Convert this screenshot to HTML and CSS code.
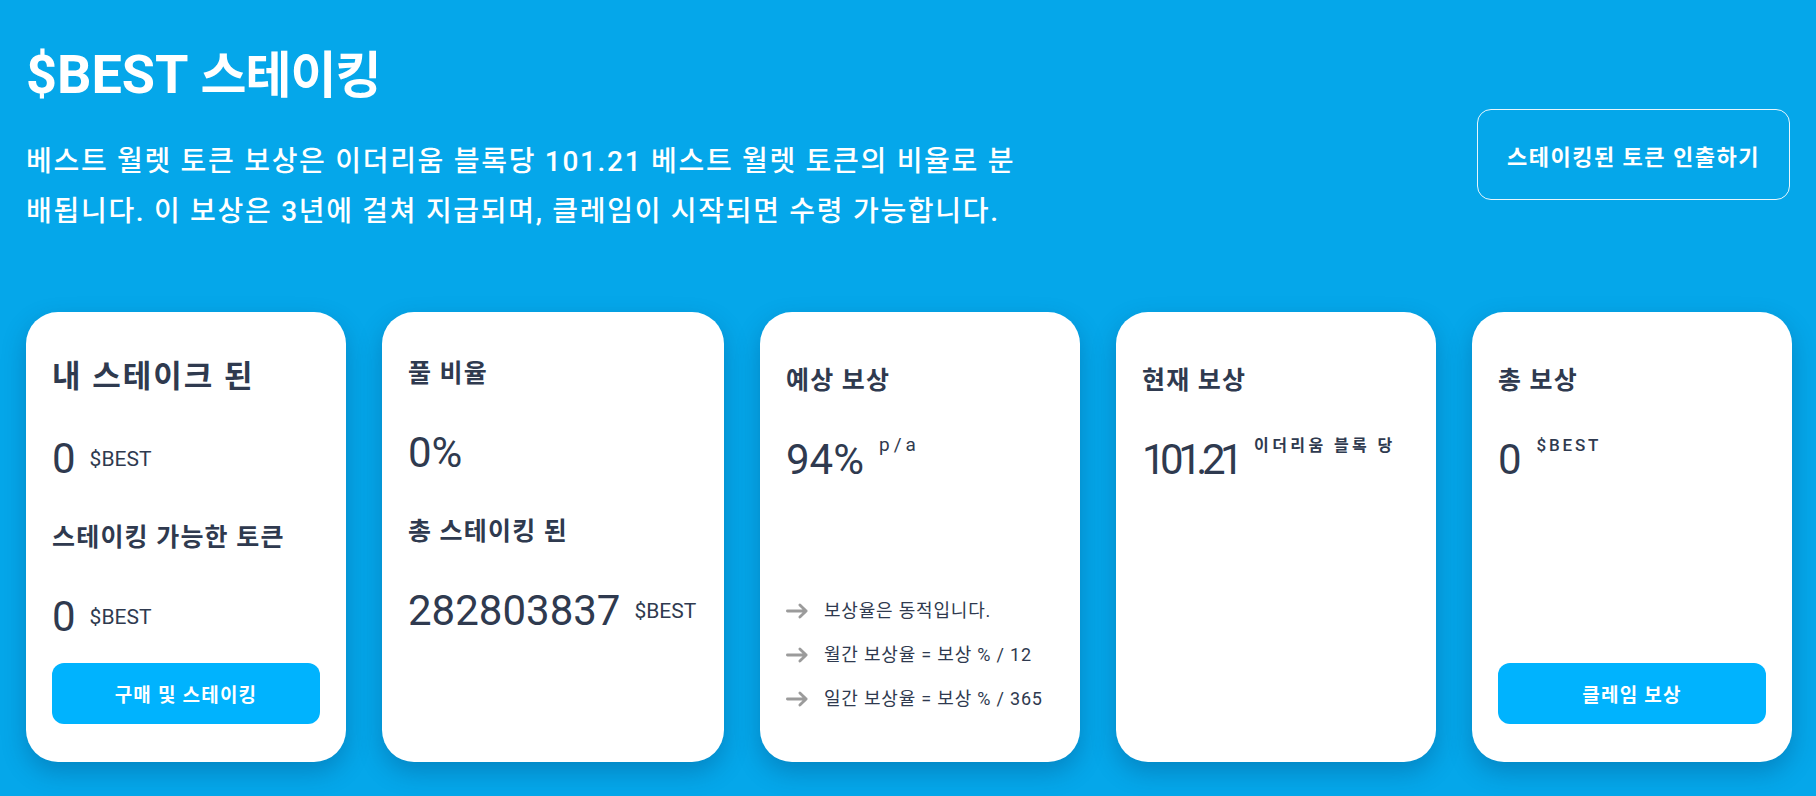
FILE: index.html
```html
<!DOCTYPE html>
<html lang="ko">
<head>
<meta charset="utf-8">
<title>$BEST 스테이킹</title>
<link rel="stylesheet" href="styles.css">
</head>
<body>
<main class="page">
  <header class="hero">
    <div class="hero-text">
      <h1 class="hero-title">$BEST <span class="hero-title-ko">스테이킹</span></h1>
      <p class="hero-desc">베스트 월렛 토큰 보상은 이더리움 블록당 101.21 베스트 월렛 토큰의 비율로 분배됩니다. 이 보상은 3년에 걸쳐 지급되며, 클레임이 시작되면 수령 가능합니다.</p>
    </div>
    <button class="btn-outline" type="button">스테이킹된 토큰 인출하기</button>
  </header>

  <section class="cards">
    <article class="card">
      <h2 class="card-title card-title--lg">내 스테이크 된</h2>
      <div class="stat"><span class="stat-value">0</span><span class="stat-unit">$BEST</span></div>
      <h3 class="card-title card-subtitle">스테이킹 가능한 토큰</h3>
      <div class="stat"><span class="stat-value">0</span><span class="stat-unit">$BEST</span></div>
      <button class="btn-fill" type="button">구매 및 스테이킹</button>
    </article>

    <article class="card card--wide">
      <h2 class="card-title">풀 비율</h2>
      <div class="stat"><span class="stat-value">0%</span></div>
      <h3 class="card-title card-subtitle">총 스테이킹 된</h3>
      <div class="stat"><span class="stat-value">282803837</span><span class="stat-unit">$BEST</span></div>
    </article>

    <article class="card card--reward">
      <h2 class="card-title">예상 보상</h2>
      <div class="stat stat--sup"><span class="stat-value">94%</span><span class="stat-sup stat-sup--pa">p/a</span></div>
      <ul class="rules">
        <li class="rule"><svg class="rule-arrow" viewBox="0 0 24 16" aria-hidden="true"><path d="M1.5 8H21M14.5 1.8L21 8L14.5 14.2"/></svg><span>보상율은 동적입니다.</span></li>
        <li class="rule"><svg class="rule-arrow" viewBox="0 0 24 16" aria-hidden="true"><path d="M1.5 8H21M14.5 1.8L21 8L14.5 14.2"/></svg><span>월간 보상율 = 보상 % / 12</span></li>
        <li class="rule"><svg class="rule-arrow" viewBox="0 0 24 16" aria-hidden="true"><path d="M1.5 8H21M14.5 1.8L21 8L14.5 14.2"/></svg><span>일간 보상율 = 보상 % / 365</span></li>
      </ul>
    </article>

    <article class="card card--reward">
      <h2 class="card-title">현재 보상</h2>
      <div class="stat stat--sup"><span class="stat-value stat-value--tight">101.21</span><span class="stat-sup stat-sup--ko">이더리움 블록 당</span></div>
    </article>

    <article class="card card--reward">
      <h2 class="card-title">총 보상</h2>
      <div class="stat stat--sup"><span class="stat-value">0</span><span class="stat-sup">$BEST</span></div>
      <button class="btn-fill" type="button">클레임 보상</button>
    </article>
  </section>
</main>
</body>
</html>
```

FILE: styles.css
```css
html, body {
  margin: 0;
  background: #05a7ea;
}

body {
  min-height: 100vh;
  font-family: Roboto, "Noto Sans CJK KR", "Noto Sans", sans-serif;
  color: #2f3a4f;
}

.page {
  padding: 43px 26px 0;
}

.hero {
  display: flex;
  justify-content: space-between;
  align-items: flex-start;
}

.hero-title {
  margin: 0;
  font-size: 54px;
  line-height: 64px;
  font-weight: 700;
  color: #ffffff;
}

.hero-title-ko {
  font-size: 50px;
  letter-spacing: -1px;
}

.hero-desc {
  margin: 29px 0 0;
  width: 1000px;
  font-size: 28px;
  line-height: 50px;
  font-weight: 500;
  letter-spacing: 1.7px;
  color: #ffffff;
}

.btn-outline {
  margin-top: 66px;
  height: 91px;
  padding: 0 29px;
  box-sizing: border-box;
  border: 1px solid rgba(255, 255, 255, 0.9);
  border-radius: 14px;
  background: transparent;
  color: #ffffff;
  font-family: inherit;
  font-size: 22px;
  font-weight: 700;
  letter-spacing: 1.5px;
  cursor: pointer;
}

.cards {
  display: flex;
  gap: 36px;
  margin-top: 75px;
}

.card {
  flex: none;
  width: 320px;
  height: 450px;
  box-sizing: border-box;
  padding: 40px 26px 38px;
  display: flex;
  flex-direction: column;
  background: #ffffff;
  border-radius: 32px;
  box-shadow: 0 10px 24px rgba(0, 45, 95, 0.28);
}

.card--wide {
  width: 342px;
}

.card-title {
  margin: 0;
  font-size: 25px;
  line-height: 44px;
  font-weight: 700;
  letter-spacing: 1.2px;
}

.card-title--lg {
  font-size: 31px;
  line-height: 50px;
  letter-spacing: 2px;
}

.card-subtitle {
  margin-top: 32px;
}

.card--reward .card-title {
  margin-top: 7px;
}

.stat {
  display: flex;
  align-items: center;
  height: 50px;
  margin-top: 32px;
}

.stat--sup {
  align-items: flex-start;
}

.stat-value {
  font-size: 42px;
  line-height: 50px;
  font-weight: 400;
}

.stat-value--tight {
  letter-spacing: -5.5px;
}

.stat-unit {
  margin-left: 14px;
  font-size: 21px;
  line-height: 30px;
}

.stat-sup {
  margin-left: 15px;
  font-size: 17px;
  line-height: 20px;
  font-weight: 500;
  letter-spacing: 2.8px;
}

.stat-sup--ko {
  margin-left: 16px;
  margin-top: 1px;
  font-size: 16px;
  font-weight: 700;
  letter-spacing: 3.4px;
}

.stat-sup--pa {
  margin-top: 0;
  font-size: 19px;
  font-weight: 400;
  letter-spacing: 4px;
}

.rules {
  list-style: none;
  margin: auto 0 3px;
  padding: 0;
}

.rule {
  display: flex;
  align-items: center;
  gap: 15px;
  height: 44px;
  font-size: 18px;
  line-height: 44px;
  letter-spacing: 0.8px;
}

.rule-arrow {
  flex: none;
  width: 23px;
  height: 16px;
  fill: none;
  stroke: #9b9b9b;
  stroke-width: 3;
  stroke-linecap: round;
  stroke-linejoin: round;
}

.btn-fill {
  margin-top: auto;
  width: 100%;
  height: 61px;
  border: none;
  border-radius: 12px;
  background: #00b3fe;
  color: #ffffff;
  font-family: inherit;
  font-size: 19px;
  font-weight: 700;
  letter-spacing: 1.2px;
  cursor: pointer;
}
```
